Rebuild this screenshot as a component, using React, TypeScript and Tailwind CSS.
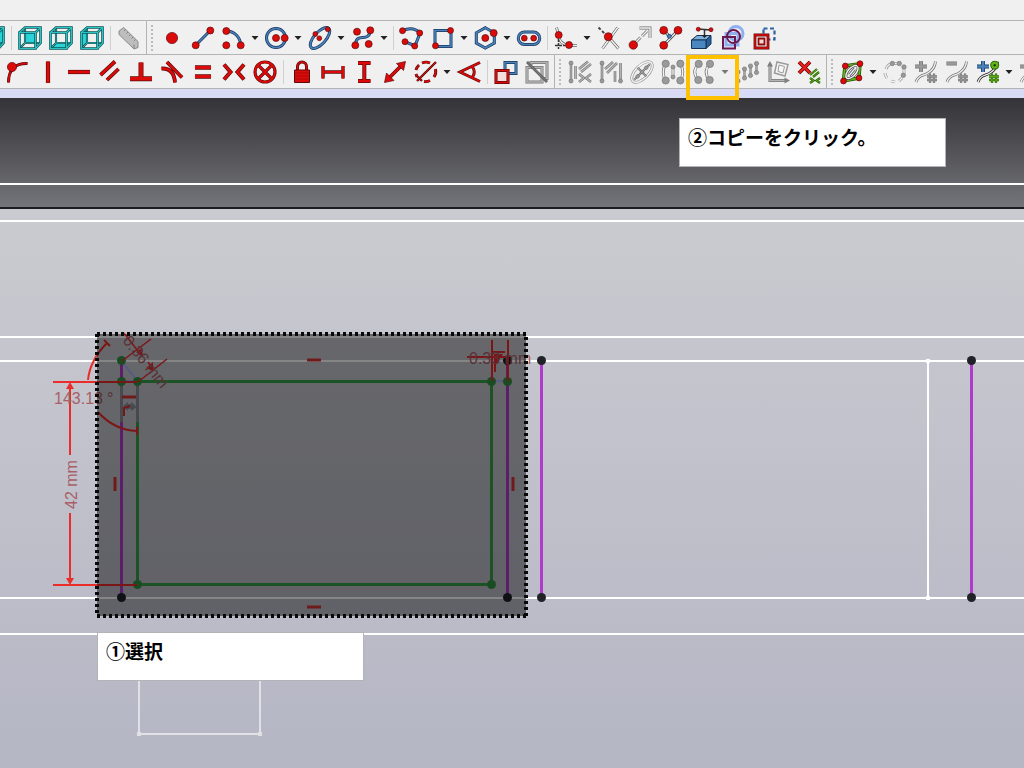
import type { ReactNode } from "react";

const RED = "#dd0a0a";
const DARK_RED = "#5c0b0b";
const BLUE = "#4a82bd";
const DARK_BLUE = "#16365c";
const GREEN = "#62b515";
const GREY = "#9a9a9a";
const DARK_GREY = "#777777";

interface StrokeProps {
  d: string;
  c?: string;
  o?: string;
  w?: number;
}

// a coloured line with a thin dark outline, as all toolbar icons use
function Stroke({ d, c = RED, o = DARK_RED, w = 2 }: StrokeProps) {
  return (
    <>
      <path d={d} stroke={o} strokeWidth={w + 1.4} fill="none" />
      <path d={d} stroke={c} strokeWidth={w} fill="none" />
    </>
  );
}

interface DotsProps {
  at: number[][];
  r?: number;
  c?: string;
  o?: string;
}

function Dots({ at, r = 3.5, c = RED, o = DARK_RED }: DotsProps) {
  return (
    <>
      {at.map(([x, y]) => (
        <circle key={`${x}-${y}`} cx={x} cy={y} r={r} fill={c} stroke={o} strokeWidth={0.7} />
      ))}
    </>
  );
}

function BlueStroke({ d }: { d: string }) {
  return <Stroke d={d} c={BLUE} o={DARK_BLUE} w={1.6} />;
}

function GreyStroke({ d, w = 1.6 }: { d: string; w?: number }) {
  return <Stroke d={d} c="#b4b4b4" o={DARK_GREY} w={w} />;
}

function HollowStroke({ d, o = "#666666" }: { d: string; o?: string }) {
  return <Stroke d={d} c="#f4f4f4" o={o} w={1.4} />;
}

function GreyDots({ at, r = 2.6 }: { at: number[][]; r?: number }) {
  return <Dots at={at} r={r} c={GREY} o={DARK_GREY} />;
}

function Cube({ face }: { face: string }) {
  return (
    <>
      <path d={face} fill="#29d3d8" />
      <Stroke d="M7 17H23M7 17V1M7 17L1.500 22.500" c="#4fc9c9" o="#0b5555" w={0.7} />
      <Stroke
        d="M1.500 6.500H17.500V22.500H1.500ZM1.500 6.500L7 1.500H22.500V17L17.500 22.500M17.500 6.500L22.500 1.500"
        c="#2bc4c6"
        o="#0b5555"
        w={1.2}
      />
    </>
  );
}

function Hash({ c, o }: { c: string; o: string }) {
  return <Stroke d="M16 13.500V23M20 13.500V23M13 16.500H23M13 20H23" c={c} o={o} w={0.9} />;
}

function KnotIcon({ minus = false, active = false }: { minus?: boolean; active?: boolean }) {
  return (
    <>
      <HollowStroke
        d="M2 22C5 14 10 16 14 13C19 10 21 7 21.500 1.500"
        o={active ? "#222222" : "#777777"}
      />
      <Hash c={active ? GREEN : GREY} o={active ? "#2c6405" : DARK_GREY} />
      <Stroke
        d={minus ? "M1.500 3.500H12" : "M1 6.500H13M7 1V12"}
        c={active ? BLUE : GREY}
        o={active ? DARK_BLUE : DARK_GREY}
        w={2.6}
      />
      {active && (
        <>
          <circle cx="18.700" cy="5.300" r="4" fill={GREEN} stroke="#2c6405" />
          <circle cx="18.700" cy="5.300" r="1.200" fill="#174000" />
        </>
      )}
    </>
  );
}

interface Tool {
  label: string;
  icon: ReactNode;
  menu?: boolean;
  disabled?: boolean;
}

const SEPARATOR = "separator";
type Item = Tool | typeof SEPARATOR;

const viewTools: Item[] = [
  { label: "Right view", icon: <Cube face="M17.500 6.500L22.500 1.500V17L17.500 22.500Z" /> },
  SEPARATOR,
  { label: "Rear view", icon: <Cube face="M7 6.500H17.500V17H7Z" /> },
  { label: "Bottom view", icon: <Cube face="M1.500 22.500L7 17H22.500L17.500 22.500Z" /> },
  { label: "Left view", icon: <Cube face="M1.500 6.500L7 1.500V17L1.500 22.500Z" /> },
  SEPARATOR,
  {
    label: "Measure",
    disabled: true,
    icon: (
      <>
        <path d="M2 5L6.700 1.500L21 15.500V21.500L17 23L2 8.500Z" fill="#bdbdbd" stroke="#8a8a8a" />
        <path
          d="M8.500 3.500L7 5M11 6L9.500 7.500M13.500 8.500L12 10M16 11L14.500 12.500M18.500 13.500L17 15M17 18.500V22.500"
          stroke="#858585"
          fill="none"
        />
      </>
    ),
  },
];

const geometryTools: Item[] = [
  { label: "Point", icon: <Dots at={[[12, 12]]} r={5.6} /> },
  {
    label: "Line",
    icon: (
      <>
        <BlueStroke d="M4.700 19.300L19.300 4.500" />
        <Dots at={[[4.7, 19.3], [19.3, 4.5]]} />
      </>
    ),
  },
  {
    label: "Arc",
    menu: true,
    icon: (
      <>
        <BlueStroke d="M4.300 5C12 5 18.500 11 18.700 19.300" />
        <Dots at={[[4.3, 5], [4.3, 19.3], [18.7, 19.3]]} />
      </>
    ),
  },
  {
    label: "Circle",
    menu: true,
    icon: (
      <>
        <BlueStroke d="M1.500 12A9.500 9.500 0 1 1 20.500 12A9.500 9.500 0 1 1 1.500 12" />
        <Dots at={[[11, 12], [19.7, 12]]} />
      </>
    ),
  },
  {
    label: "Ellipse",
    menu: true,
    icon: (
      <>
        <g transform="rotate(-48 12 12)">
          <BlueStroke d="M-1 12A13 5.800 0 1 1 25 12A13 5.800 0 1 1 -1 12" />
        </g>
        <Dots at={[[19.7, 3.3], [7.3, 8], [11.3, 12.3]]} r={2.4} />
      </>
    ),
  },
  {
    label: "B-spline",
    menu: true,
    icon: (
      <>
        <BlueStroke d="M4.300 19.300C5 5 18 18 19.300 4.300" />
        <Dots at={[[6, 5.7], [19.3, 4.3], [4.3, 19.3], [17.7, 18]]} />
      </>
    ),
  },
  SEPARATOR,
  {
    label: "Polyline",
    icon: (
      <>
        <BlueStroke d="M2.500 4.700Q13 0 20 7L15 20L5 15.700" />
        <Dots at={[[2.5, 4.7], [19.7, 7], [5, 15.7], [14.7, 20]]} r={3} />
      </>
    ),
  },
  {
    label: "Rectangle",
    menu: true,
    icon: (
      <>
        <BlueStroke d="M4 4.500H20V20.500H4Z" />
        <Dots at={[[19.5, 4.5], [4.5, 19.8]]} r={3} />
      </>
    ),
  },
  {
    label: "Polygon",
    menu: true,
    icon: (
      <>
        <BlueStroke d="M11.300 1.800L20.300 6.800V17L11.300 22L2.300 17V6.800Z" />
        <Dots at={[[11.3, 12], [19.7, 7]]} />
      </>
    ),
  },
  {
    label: "Slot",
    icon: (
      <>
        <BlueStroke d="M7.500 6H16.500A6 6 0 0 1 16.500 18.500H7.500A6 6 0 0 1 7.500 6" />
        <Dots at={[[7.3, 12.2], [16.7, 12.2]]} r={2.9} />
      </>
    ),
  },
  SEPARATOR,
  {
    label: "Fillet",
    menu: true,
    icon: (
      <>
        <HollowStroke d="M2.500 1.500L4.700 9Q5 18 15 19.500H23" />
        <path d="M4.500 13V23M1 19.500H11" stroke="#333333" strokeWidth="1.500" strokeDasharray="3 1" fill="none" />
        <Dots at={[[4.7, 9], [15, 19]]} r={3.5} />
      </>
    ),
  },
  {
    label: "Trim",
    icon: (
      <>
        <HollowStroke d="M20.700 1.500L5.500 22.500M11.300 10.700L21.500 22.500" />
        <path d="M1.500 1.500L9 9" stroke="#444444" strokeWidth="2" strokeDasharray="3 2" />
        <Dots at={[[11.3, 10.7]]} r={4} />
      </>
    ),
  },
  {
    label: "Extend",
    icon: (
      <>
        <HollowStroke d="M5 19L12.500 11.500M14 10L19 5M11.500 2H22V12" />
        <Dots at={[[5.3, 19]]} r={4.2} />
      </>
    ),
  },
  {
    label: "Split",
    icon: (
      <>
        <HollowStroke d="M4.700 4.300L10.500 10.500M19 4.300L4.700 19.300" o="#333333" />
        <Dots at={[[10.3, 10.3]]} r={2} c={BLUE} o={DARK_BLUE} />
        <Dots at={[[4.7, 4.3], [19, 4.3], [4.7, 19.3]]} r={3.9} />
      </>
    ),
  },
  {
    label: "External geometry",
    icon: (
      <>
        <path d="M1.500 14L7 9.500H21L16 14Z" fill="#7fb0dc" stroke="#123456" />
        <path d="M16 14L21 9.500V18L16 22.500Z" fill="#2a5f98" stroke="#123456" />
        <path d="M1.500 14H16V22.500H1.500Z" fill="#4a86c0" stroke="#123456" />
        <path d="M8 3L21 4M14.500 4V11" stroke="#333333" strokeWidth="1.500" />
        <Dots at={[[8.3, 3.2], [21, 3.7]]} r={2} />
        <path d="M11.500 9L14.500 12L17.500 9Z" fill="#222222" />
      </>
    ),
  },
  {
    label: "Carbon copy",
    icon: (
      <>
        <path
          d="M8 7.500A7 7 0 1 1 22 7.500A7 7 0 1 1 8 7.500M5 7.500H17V19H5Z"
          stroke="#8fb0ef"
          strokeWidth="3"
          fill="none"
        />
        <path
          d="M6 10.500A6.500 6.500 0 1 1 19 10.500A6.500 6.500 0 1 1 6 10.500M2 11H14V22.500H2Z"
          stroke="#6d1750"
          strokeWidth="2"
          fill="none"
        />
      </>
    ),
  },
  {
    label: "Construction geometry",
    icon: (
      <>
        <path d="M11.500 2.500H22.500V13.500H11.500Z" stroke="#2d62a3" strokeWidth="2.200" strokeDasharray="4 2.500" fill="none" />
        <path d="M2.500 8.500H16.500V22.500H2.500Z" fill="#ffffff" />
        <Stroke d="M3 9H16V22H3Z" w={1.4} />
        <path d="M6.500 12.500H12.500V18.500H6.500Z" fill="#f4d4d4" stroke="#8c0a0a" strokeWidth="1.800" />
      </>
    ),
  },
];

const constraintTools: Item[] = [
  {
    label: "Coincident",
    icon: (
      <>
        <Stroke d="M3.500 22.500Q3.500 3 22.500 3.500" w={1.6} />
        <Dots at={[[7, 7]]} r={4.6} />
      </>
    ),
  },
  { label: "Vertical", icon: <Stroke d="M12 1.500V23" w={2.8} /> },
  { label: "Horizontal", icon: <Stroke d="M1 12H23" w={2.8} /> },
  { label: "Parallel", icon: <Stroke d="M2.500 15L17 1.500M9 20L20.500 9" w={2.4} /> },
  { label: "Perpendicular", icon: <Stroke d="M12 2.500V18M1 18.700H23" w={3.6} /> },
  { label: "Tangent", icon: <Stroke d="M1.500 8.500Q14 8 15 22.500M7 2L22 17.500" w={2.4} /> },
  { label: "Equal", icon: <Stroke d="M4 7.500H20M4 16.500H20" w={3} /> },
  { label: "Symmetric", icon: <Stroke d="M2 4.500L8.500 12L2 19.500M22 4.500L15.500 12L22 19.500" w={2.6} /> },
  {
    label: "Block",
    icon: <Stroke d="M2 12A10 10 0 1 1 22 12A10 10 0 1 1 2 12M5 5L19 19M19 5L5 19" w={1.8} />,
  },
  SEPARATOR,
  {
    label: "Lock",
    icon: (
      <>
        <Stroke d="M7.500 11V6.500A4.500 4.500 0 0 1 16.500 6.500V11" w={1.6} />
        <path d="M4.500 10H19.500V22.500H4.500Z" fill={RED} stroke={DARK_RED} />
        <path d="M5 13H19M5 16H19M5 19H19" stroke="#a10808" strokeWidth="0.800" />
      </>
    ),
  },
  { label: "Horizontal distance", icon: <Stroke d="M2 6V18.500M22 6V18.500M2 12H22" w={2} /> },
  { label: "Vertical distance", icon: <Stroke d="M6 3H18.500M6 21H18.500M12.300 3V21" w={2.6} /> },
  {
    label: "Distance",
    icon: (
      <>
        <Stroke d="M5 19L19 5" w={2.4} />
        <path d="M1.500 22.500L3.500 13L11 20.500ZM22.500 1.500L13.500 3.500L20.500 10.500Z" fill={RED} stroke={DARK_RED} strokeWidth="0.700" />
      </>
    ),
  },
  {
    label: "Diameter",
    menu: true,
    icon: (
      <>
        <Stroke
          d="M2 10A10 10 0 0 1 5 5M8 3A10 10 0 0 1 16 3M21.500 9A10 10 0 0 1 20 17M16 20.500A10 10 0 0 1 10 21.500M3 17L2 14"
          w={1.5}
        />
        <Stroke d="M3 21L22 2M3 16L8 21" w={1} />
      </>
    ),
  },
  { label: "Angle", icon: <Stroke d="M23 2.500L3 12L23 21.500M15.500 7Q19 12 15.500 17" w={1.6} /> },
  SEPARATOR,
  {
    label: "Toggle driving",
    icon: (
      <>
        <BlueStroke d="M11 2.500H22V13.500H11Z" />
        <path d="M2 10.500H14V22.500H2Z" fill="#f3dddd" />
        <Stroke d="M2 10.500H14V22.500H2Z" w={1.7} />
      </>
    ),
  },
  {
    label: "Toggle active",
    disabled: true,
    icon: (
      <>
        <GreyStroke d="M6 5V2.500H22V18.500H18" />
        <GreyStroke d="M2 7.500H17V22H2Z" />
        <Stroke d="M2 2L22 22" c="#777777" o="#5c5c5c" w={1.2} />
      </>
    ),
  },
];

const sketcherTools: Item[] = [
  {
    label: "Select constraints",
    disabled: true,
    icon: (
      <>
        <GreyStroke d="M3 3V21.500M7.500 6V19M11 9L20 1.500M13 12L23 4M11 14L16 18L11 22M23 14L18 18L23 22" w={1.1} />
        <GreyDots at={[[3, 3], [3, 21]]} r={2} />
      </>
    ),
  },
  {
    label: "Select elements",
    disabled: true,
    icon: (
      <>
        <GreyStroke d="M3 3V21.500M21.500 3V21.500M6 9L14 2M8 13L18 3M16 11V22" w={1.2} />
        <GreyDots at={[[3, 3], [3, 21], [21.5, 21]]} r={2} />
      </>
    ),
  },
  {
    label: "Internal geometry",
    disabled: true,
    icon: (
      <g transform="rotate(-45 12 12)">
        <HollowStroke d="M-1 12A13 6.500 0 1 1 25 12A13 6.500 0 1 1 -1 12" o={GREY} />
        <GreyStroke d="M1 12H23M12 6V18" w={0.8} />
        <GreyDots at={[[6, 12], [12, 12], [18, 12]]} r={1.8} />
      </g>
    ),
  },
  {
    label: "Symmetry",
    disabled: true,
    icon: (
      <>
        <HollowStroke d="M4.500 4Q0 12 4.500 20.500M19.500 4Q24 12 19.500 20.500M12 7V17" o={DARK_GREY} />
        <GreyDots at={[[4.7, 3.7], [4.7, 20.5], [19.3, 3.7], [19.3, 20.5]]} r={3.6} />
        <GreyDots at={[[12, 7], [12, 17]]} r={2} />
      </>
    ),
  },
  {
    label: "Copy",
    menu: true,
    disabled: true,
    icon: (
      <>
        <HollowStroke d="M6.500 4Q-1 12 6.500 20.500M17.800 4Q10.500 12 17.800 20.500" o={DARK_GREY} />
        <GreyDots at={[[6.7, 3.9], [6.3, 20], [18, 3.9], [17.7, 20]]} r={3.6} />
      </>
    ),
  },
  {
    label: "Rectangular array",
    disabled: true,
    icon: (
      <>
        <GreyStroke d="M3 12V21M9.500 9V18M15.500 6V15.500M21.500 3.500V12.500" w={0.8} />
        <GreyDots
          at={[[3, 12], [3, 21], [9.5, 9], [9.5, 18], [15.5, 6], [15.5, 15.5], [21.5, 3.5], [21.5, 12.5]]}
          r={2.1}
        />
      </>
    ),
  },
  {
    label: "Remove axes alignment",
    disabled: true,
    icon: (
      <>
        <GreyStroke d="M4 4V20.500H20" w={1.6} />
        <path d="M4 1L7 6.500H1ZM24 20.500L18.500 17.500V23.500Z" fill="#808080" />
        <path d="M11 2L22 4.500L19 16L8.500 13Z" fill="#f6f6f6" stroke={GREY} strokeWidth="1.500" />
        <path d="M13 5L18.500 6.500L17 13L12 11.500Z" fill="none" stroke={GREY} />
      </>
    ),
  },
  {
    label: "Delete all constraints",
    icon: (
      <>
        <Stroke d="M2 2L13 13M13 2L2 13" w={2.4} c="#ed1c1c" />
        <Stroke d="M13 15L20 9M16 17L22 12M13 18L16.500 20.500L13 23M23 18L19.500 20.500L23 23" c={GREEN} o="#2c6405" w={0.9} />
      </>
    ),
  },
];

const splineTools: Item[] = [
  {
    label: "Show B-spline info",
    menu: true,
    icon: (
      <>
        <Stroke d="M5 6L20 3.700L19 18L3.500 21Z" c={GREEN} o="#1c4a02" w={2} />
        <g transform="rotate(-48 12 12)">
          <HollowStroke d="M4 12A8 4 0 1 1 20 12A8 4 0 1 1 4 12M8 12H16" o="#444444" />
        </g>
        <Dots at={[[5.3, 6], [20, 3.7], [3.5, 21], [19, 18]]} r={2.9} />
      </>
    ),
  },
  {
    label: "Convert to B-spline",
    disabled: true,
    icon: (
      <>
        <HollowStroke
          d="M3 9Q4 6 7 4M9 3.500H14M2 13Q2 16 4 18M8 21L12 22M16 21L19 18M21 9V14"
          o={GREY}
        />
        <GreyDots at={[[9.3, 3.5], [16.3, 3.5], [21, 7], [20.3, 15.3]]} r={2.2} />
      </>
    ),
  },
  { label: "Increase degree", disabled: true, icon: <KnotIcon /> },
  { label: "Decrease degree", disabled: true, icon: <KnotIcon minus /> },
  { label: "Insert knot", menu: true, icon: <KnotIcon active /> },
  { label: "Join curves", disabled: true, icon: <KnotIcon /> },
];

function ToolButton({ label, icon, menu, disabled }: Tool) {
  return (
    <div className="flex h-8 shrink-0">
      <button type="button" aria-label={label} disabled={disabled} className="h-8 w-[31px] pl-1">
        <svg viewBox="0 0 24 24" className="size-6 overflow-visible" aria-hidden="true">
          {icon}
        </svg>
      </button>
      {menu && (
        <button
          type="button"
          aria-label={`${label} options`}
          disabled={disabled}
          className="flex h-8 w-3 items-center justify-center"
        >
          <svg viewBox="0 0 8 4" className="h-1 w-2" aria-hidden="true">
            <path d="M0.500 0H7.500L4 4Z" fill={disabled ? "#777777" : "#222222"} />
          </svg>
        </button>
      )}
    </div>
  );
}

interface ToolGroupProps {
  name: string;
  items: Item[];
  handle?: boolean;
  last?: boolean;
}

function ToolGroup({ name, items, handle = true, last = false }: ToolGroupProps) {
  return (
    <div
      role="toolbar"
      aria-label={name}
      className={`flex shrink-0 items-end ${last ? "" : "border-r border-[#b4b4b4] pr-0.5"}`}
    >
      {handle && (
        <div className="flex h-8 w-[9px] items-center justify-center">
          <div className="h-[26px] border-l-2 border-dotted border-[#bcbcbc]" />
        </div>
      )}
      {items.map((item, i) =>
        item === SEPARATOR ? (
          <div key={i} className="flex h-8 w-1.5 items-center justify-center">
            <div className="h-6 w-px bg-[#cfcfcf]" />
          </div>
        ) : (
          <ToolButton key={item.label} {...item} />
        ),
      )}
    </div>
  );
}

// construction lines that run over the whole width
const rules = [184, 221, 337, 361, 598, 634];

function Sketch() {
  return (
    <svg className="absolute inset-0 size-full" role="img" aria-label="Sketch">
      <g transform="translate(0 -98)" fill="none" fontFamily="'Liberation Sans', Arial, sans-serif">
        {rules.map((y) => (
          <line key={y} x1="0" x2="100%" y1={y} y2={y} stroke="#ffffff" strokeWidth="2" />
        ))}
        <path d="M928 361V598" stroke="#ffffff" strokeWidth="2" />
        <path d="M139 670V734H260V670" stroke="#e0e1e4" strokeWidth="2" />
        <path d="M137 732h4v4h-4zM258 732h4v4h-4z" fill="#e0e1e4" />
        <path d="M926 359h4v4h-4zM926 596h4v4h-4z" fill="#ffffff" />

        {/* edges of the part */}
        <path d="M121.500 361V597M507.500 361V597M541.500 361V597M971.500 361V597" stroke="#b03acb" strokeWidth="3" />
        <path d="M121.500 361L137.500 381H121.500M491.500 381H507.500" stroke="#a0afff" strokeWidth="2" />
        <path d="M137.500 381.500H491.500V584.500H137.500Z" stroke="#36a048" strokeWidth="3" />
        <path d="M121.500 383V422M137.500 383V422" stroke="#888d98" strokeWidth="3" />
        <g fill="#202227">
          <circle cx="121.500" cy="597.500" r="4.500" />
          <circle cx="507.500" cy="597.500" r="4.500" />
          <circle cx="507.500" cy="360.500" r="4.500" />
          <circle cx="541.500" cy="597.500" r="4.500" />
          <circle cx="541.500" cy="360.500" r="4.500" />
          <circle cx="971.500" cy="597.500" r="4.500" />
          <circle cx="971.500" cy="360.500" r="4.500" />
        </g>
        <g fill="#329345">
          <circle cx="121.500" cy="360.500" r="4.500" />
          <circle cx="121.500" cy="381.500" r="4.500" />
          <circle cx="137.500" cy="381.500" r="4.500" />
          <circle cx="491.500" cy="381.500" r="4.500" />
          <circle cx="507.500" cy="381.500" r="4.500" />
          <circle cx="137.500" cy="584.500" r="4.500" />
          <circle cx="491.500" cy="584.500" r="4.500" />
        </g>

        {/* dimensions */}
        <g stroke="#ec2b2b" strokeWidth="2">
          <path d="M53 382H137M53 585H137M70 384V455M70 513V583" />
          <path d="M88 380Q90 360 107 343M98 412Q114 430 137 431M137 427V435M104 340L110 346" />
          <path d="M122 361L151 339M138 382L167 359M124 333L141 355M153 369L148 362" strokeWidth="1.500" />
          <path d="M492 340V381M508 340V381M467 357H508M495 354V372M493 352H505" />
        </g>
        <path
          d="M70 382L74 389H66ZM70 585L66 578H74ZM143 357L136 352L142 348ZM146 368L153 362L153 371ZM494 354H503L495 366Z"
          fill="#ec2b2b"
        />
        <path d="M123 406L128 402V404H131V402L137 407L131 411V409H128V411Z" fill="#8b8f99" />
        <path d="M124 416V408L130 406" stroke="#dd2d2d" strokeWidth="2" />
        <path
          d="M307 360H321M307 607H321M115 477V491M513 477V491M122 397H136"
          stroke="#d53434"
          strokeWidth="3"
        />
        <g fill="#a85f68" fontSize="16">
          <text x="54" y="404">143.13</text>
          <text x="107" y="404">°</text>
          <text x="469" y="364">0.33 mm</text>
          <text transform="translate(77 509) rotate(-90)">42 mm</text>
          <text transform="translate(122 341) rotate(51)">0.36 mm</text>
        </g>

        {/* selected area */}
        <path d="M97 334H526V616H97Z" fill="#000000" fillOpacity="0.480" />
        <path
          d="M97 334H526V616M97 334V616H526"
          stroke="#080808"
          strokeWidth="4"
          strokeDasharray="3 3"
          shapeRendering="crispEdges"
        />
      </g>
    </svg>
  );
}

export default function App() {
  return (
    <div className="relative flex min-h-screen flex-col overflow-hidden bg-[#f0f0f0] font-['Liberation_Sans','Noto_Sans_CJK_JP',sans-serif]">
      <header>
        <div className="h-[21px] border-b border-[#b4b4b4]" />
        <div className="flex h-[34px] overflow-hidden border-b border-[#b4b4b4]">
          <div className="-ml-[23px] flex">
            <ToolGroup name="View" items={viewTools} handle={false} />
            <ToolGroup name="Geometry" items={geometryTools} last />
          </div>
        </div>
        <div className="flex h-[34px] overflow-hidden border-b border-[#b4b4b4] pl-px">
          <ToolGroup name="Constraints" items={constraintTools} handle={false} />
          <ToolGroup name="Sketcher tools" items={sketcherTools} />
          <ToolGroup name="B-spline tools" items={splineTools} last />
        </div>
        <div className="h-[9px] bg-[#d9daf5]" />
      </header>

      <main className="relative flex flex-1 flex-col">
        <div className="h-[111px] border-b-2 border-[#1c1c1e] bg-linear-to-b from-[#343338] to-[#74757a]" />
        <div className="min-h-[559px] flex-1 bg-linear-to-b from-[#cacbd0] to-[#b5b6c4]" />
        <Sketch />
        <p className="absolute top-5 left-[679px] h-[49px] w-[267px] border border-[#b4b4b8] bg-white px-2 pt-1.5 text-[19px] leading-7 font-bold text-black">
          ②コピーをクリック。
        </p>
        <p className="absolute top-[534px] left-[97px] h-[49px] w-[267px] border border-[#b4b4b8] bg-white px-2 pt-1.5 text-[19px] leading-7 font-bold text-black">
          ①選択
        </p>
      </main>

      {/* highlight round the copy button */}
      <div className="pointer-events-none absolute top-[55px] left-[686px] h-[45px] w-[53px] border-4 border-[#ffc000]" />
    </div>
  );
}
